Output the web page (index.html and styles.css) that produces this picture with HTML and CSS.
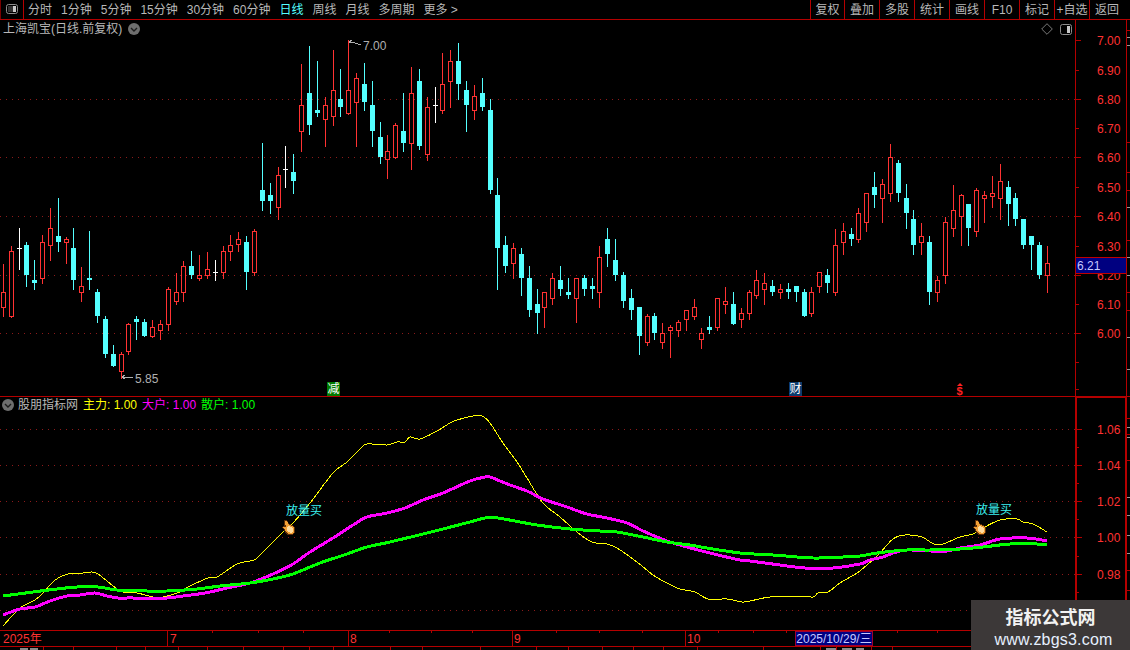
FILE: index.html
```html
<!DOCTYPE html>
<html lang="zh-CN">
<head>
<meta charset="utf-8">
<title>上海凯宝 日线</title>
<link rel="stylesheet" href="styles.css">
</head>
<body>
<div class="app">
  <header class="toolbar">
    <div class="toggle-cell">
      <svg class="toggle-icon" width="13" height="11" viewBox="0 0 13 11"><rect x="0.5" y="0.5" width="11" height="9" rx="2" fill="none" stroke="#8c8c8c"/><rect x="7" y="2" width="3" height="6" fill="#c8c8c8"/><rect x="2" y="2" width="5" height="6" fill="#333"/></svg>
    </div>
    <nav class="periods">
      <span>分时</span><span>1分钟</span><span>5分钟</span><span>15分钟</span><span>30分钟</span><span>60分钟</span><span class="active">日线</span><span>周线</span><span>月线</span><span>多周期</span><span>更多 &gt;</span>
    </nav>
    <div class="actions">
      <span class="first">复权</span><span>叠加</span><span>多股</span><span>统计</span><span>画线</span><span>F10</span><span>标记</span><span>+自选</span><span class="last">返回</span>
    </div>
  </header>

  <section class="panel price-panel">
    <div class="plot">
      <svg id="pricePlot" class="fill"></svg>
      <div class="legend">
        <span>上海凯宝(日线.前复权)</span>
        <svg class="round-icon" width="12" height="12" viewBox="0 0 12 12"><circle cx="6" cy="6" r="6" fill="#6e6e6e"/><path d="M3 5l3 3 3-3" fill="none" stroke="#1c1c1c" stroke-width="1.4"/></svg>
      </div>
      <div class="corner-icons">
        <svg width="12" height="12" viewBox="0 0 12 12"><path d="M6 .7L11.3 6 6 11.3.7 6z" fill="none" stroke="#7a7a7a"/></svg>
        <svg width="13" height="11" viewBox="0 0 13 11"><rect x="0.5" y="0.5" width="11" height="10" rx="2" fill="none" stroke="#8c8c8c"/><rect x="7" y="2" width="3" height="7" fill="#c8c8c8"/></svg>
      </div>
      <span class="flag flag-green">减</span>
      <span class="flag flag-blue">财</span>
      <span class="flag flag-dollar">$</span>
    </div>
    <div class="axis">
      <svg id="priceAxis" class="fill"></svg>
      <div class="price-tag">6.21</div>
    </div>
    <div class="strip"><svg id="priceStrip" class="fill"></svg></div>
  </section>

  <section class="panel indicator-panel">
    <div class="plot">
      <svg id="indicatorPlot" class="fill"></svg>
      <div class="legend indicator-legend">
        <svg class="round-icon-left" width="12" height="12" viewBox="0 0 12 12"><circle cx="6" cy="6" r="6" fill="#6e6e6e"/><path d="M3 5l3 3 3-3" fill="none" stroke="#1c1c1c" stroke-width="1.4"/></svg>
        <span class="name">股朋指标网</span>
        <span class="yellow">主力: 1.00</span>
        <span class="magenta">大户: 1.00</span>
        <span class="green">散户: 1.00</span>
      </div>
    </div>
    <div class="axis"><svg id="indicatorAxis" class="fill"></svg></div>
    <div class="strip"><svg id="indicatorStrip" class="fill"></svg></div>
  </section>

  <div class="time-axis">
    <svg id="timeAxis" class="fill"></svg>
    <div class="date-tag">2025/10/29/三</div>
  </div>
  <div class="footer"><svg id="footer" class="fill"></svg></div>

  <aside class="watermark">
    <strong>指标公式网</strong>
    <span>www.zbgs3.com</span>
  </aside>
</div>
<script src="chart.js"></script>
</body>
</html>
```

FILE: styles.css
```css
* { box-sizing: border-box; }
html, body { margin: 0; height: 100%; background: #000; overflow: hidden; }
body { font: 12px/1 "Liberation Sans", "Noto Sans CJK SC", sans-serif; color: #b8b8b8; }
.app { position: relative; width: 1130px; height: 650px; display: flex; flex-direction: column; }
.fill { display: block; width: 100%; height: 100%; }

.toolbar { height: 20px; flex: none; display: flex; align-items: stretch; border-bottom: 1px solid #b40000; }
.toggle-cell { width: 24px; display: flex; align-items: center; padding-left: 5px; border-right: 1px solid #b40000; border-left: 1px solid #7a0000; }
.periods { display: flex; align-items: center; gap: 9px; margin-left: 4px; white-space: nowrap; }
.periods .active { color: #54ffff; }
.actions { margin-left: auto; display: flex; }
.actions span { width: 35px; border-left: 1px solid #b40000; display: flex; align-items: center; justify-content: center; white-space: nowrap; }
.actions .first { width: 34px; }
.actions .last { width: 41px; padding-right: 6px; }

.panel { display: grid; grid-template-columns: 1075px 52px 3px; flex: none; }
.price-panel { height: 377px; border-bottom: 1px solid #b40000; }
.indicator-panel { height: 233px; }
.plot, .axis { position: relative; }
.price-panel .axis { border-left: 1px solid #b40000; border-right: 1px solid #b40000; }
.indicator-panel .axis { border-left: 2px solid #b40000; border-right: 2px solid #b40000; border-top: 1px solid #b40000; }

.legend { position: absolute; left: 3px; top: 3px; display: flex; align-items: center; gap: 6px; white-space: nowrap; }
.indicator-legend { left: 2px; top: 2px; gap: 5px; }
.indicator-legend .round-icon-left { margin-right: -1px; }
.yellow { color: #ffff00; }
.magenta { color: #ff00ff; }
.green { color: #00ff00; }

.corner-icons { position: absolute; right: 2px; top: 3px; display: flex; align-items: center; gap: 7px; }

.flag { position: absolute; top: 362px; width: 13px; height: 14px; display: flex; align-items: center; justify-content: center; color: #fff; font-size: 12px; }
.flag-green { left: 327px; background: #007a00; }
.flag-blue { left: 789px; background: #0b3c6e; }
.flag-dollar { left: 953px; top: 366px; height: 10px; color: #ff2020; font-size: 11px; font-weight: 700; }
.flag-dollar::before { content: ""; position: absolute; left: 4px; top: -3px; border-left: 3px solid transparent; border-right: 3px solid transparent; border-bottom: 3px solid #ff2020; }

.price-tag { position: absolute; left: 0; right: 0; top: 237px; height: 17px; padding-left: 1px; display: flex; align-items: center; background: #000080; border-top: 1px solid #c00000; border-bottom: 1px solid #c00000; color: #c8c8ff; }

.time-axis { position: relative; height: 17px; flex: none; border-top: 1px solid #b40000; border-bottom: 1px solid #b40000; }
.date-tag { position: absolute; left: 795px; top: 0; width: 78px; height: 15px; display: flex; align-items: center; justify-content: center; background: #000080; border: 1px solid #a00030; color: #c8c8ff; white-space: nowrap; }
.footer { flex: 1; overflow: hidden; }

.watermark { position: absolute; left: 971px; top: 600px; width: 159px; height: 50px; background: #3c3838; color: #f2f2f2; display: flex; flex-direction: column; align-items: center; padding-top: 6px; gap: 5px; }
.watermark strong { font: 700 18px/20px "Noto Sans CJK SC", sans-serif; }
.watermark span { font: 16px/18px "Liberation Sans", sans-serif; letter-spacing: 0.2px; color: #e6f0ff; margin-left: 6px; }

svg text { font-family: "Liberation Sans", "Noto Sans CJK SC", sans-serif; font-size: 12px; }
.axis-label { fill: #ff3232; }
.time-label { fill: #ff3232; }
.note { fill: #b0b0b0; }
.buy { fill: #3cf0f0; }
```

FILE: chart.js
```js
(function () {
  var NS = 'http://www.w3.org/2000/svg';
  function el(parent, tag, attrs, text) {
    var n = document.createElementNS(NS, tag);
    for (var k in attrs) n.setAttribute(k, attrs[k]);
    if (text) n.textContent = text;
    parent.appendChild(n);
    return n;
  }
  function stage(id) {
    var s = document.getElementById(id), r = s.getBoundingClientRect();
    s.setAttribute('viewBox', r.left + ' ' + r.top + ' ' + r.width + ' ' + r.height);
    s.setAttribute('shape-rendering', 'crispEdges');
    return s;
  }
  function bar(s, x, y, w, h, c) { el(s, 'rect', { x: x, y: y, width: w, height: h, fill: c }); }

  var RED = '#ff3232', CYAN = '#54ffff', WHITE = '#ffffff', LINE = '#b40000', DOT = '#8c1a1a';

  function grid(s, ys, w) {
    ys.forEach(function (y) {
      el(s, 'line', { x1: 0, x2: w, y1: y + 0.5, y2: y + 0.5, stroke: DOT, 'stroke-width': 1, 'stroke-dasharray': '1 5' });
    });
  }

  /* candles: [y origin, "type high,top,bottom,low" ...] in 3x crop units */
  var groups = [
    [130, 'R402,487,533,558 R348,364,560,560 W294,355,355,417 C336,345,435,468 C390,450,459,477 R315,337,446,459 R234,295,347,390 C204,318,336,363 R321,328,339,399 C294,354,450,477 R411,469,488,513 C303,444,450,477 C477,486,558,576 C558,567,672,681 C645,672,708,708 R666,673,725,745 R580,583,665,672 C558,567,576,627 C567,576,618,618 R570,592,620,620 R570,583,602,627 R472,478,584,600 R430,487,515,522 R393,409,488,513 C363,408,435,444 R375,436,445,450 R366,418,437,444 W390,427,427,450 R348,364,428,444 R315,346,365,390 R306,328,346,363 C318,336,426,477 R297,304,428,435 C39,180,213,240'],
    [30, 'C460,495,513,550 R411,436,533,567 W348,418,418,471 C372,426,453,489 R102,226,305,363 C48,189,285,312 C93,240,249,258 R201,226,269,348 R60,181,260,285 C117,207,231,258 R30,181,251,251 R129,145,218,348 C99,162,216,240 C153,225,303,348 C276,321,381,399 R315,364,391,444 R279,286,383,383 C189,303,339,363 R111,190,341,417 C117,153,348,357 R201,232,374,390 W171,226,226,276 R69,163,242,249 R60,94,155,231 C39,93,162,207 C153,180,225,303 R165,199,242,267 C144,189,231,240 C207,240,480,489'],
    [170, 'C24,75,234,357 C198,225,288,306 R219,235,281,324 C234,252,324,375 C288,324,420,438 C357,402,429,489 R366,367,413,471 R309,325,387,402 C288,330,357,375 C324,366,375,384 R325,325,386,456 C315,324,357,375 C324,348,357,384 R228,262,368,411 C174,207,252,288 C207,270,315,330 C306,315,393,411 C357,384,420,447 C411,411,498,552 R432,439,518,525 C429,438,489,507 R459,490,518,534 R465,472,482,561 R450,457,483,498 R421,421,449,480 R387,412,440,447 R474,490,509,534 C438,471,480,489 R385,385,473,480 R351,394,403,429 C366,402,462,462 R414,430,449,471 R360,367,431,447 R300,331,377,384 R309,340,359,402 C330,348,366,375'],
    [130, 'R462,478,488,503 C459,477,486,504 C468,468,486,513 C477,486,558,558 R471,487,552,558 R427,427,470,486 C417,435,459,486 R297,346,488,495 R279,304,338,372 C294,312,327,345 R234,250,329,336 R190,190,278,303 C126,171,195,231 R147,163,206,276 R42,82,191,213 C90,99,189,213 C162,204,249,294 C240,267,345,372 R279,319,338,372 C318,336,486,522 R438,451,488,513 R260,277,437,459 R165,241,296,318 R192,196,260,345 C222,222,294,345 R174,181,305,318 R183,196,206,276 R138,190,198,231 R102,154,206,267 C153,171,222,285 C189,204,267,285 C267,267,345,354 C318,318,345,417 C336,345,436,444 R348,400,437,486']
  ];

  var price = stage('pricePlot');
  grid(price, [99, 157, 216, 275, 333], 1075);

  var index = 0;
  groups.forEach(function (g) {
    g[1].split(' ').forEach(function (item) {
      var type = item[0];
      var v = item.slice(1).split(',').map(function (n) { return Math.round(g[0] + Number(n) / 3); });
      var col = Math.floor(3.33 + 7.85 * index);
      var color = type === 'R' ? RED : type === 'C' ? CYAN : WHITE;
      bar(price, col, v[0], 1, v[3] - v[0] + 1, color);
      if (type === 'W') {
        bar(price, col - 2, v[1], 5, 1, WHITE);
      } else if (type === 'C') {
        bar(price, col - 2, v[1], 5, Math.max(v[2] - v[1], 2), CYAN);
      } else {
        var h = Math.max(v[2] - v[1], 4);
        bar(price, col - 2, v[1], 5, h, RED);
        bar(price, col - 1, v[1] + 1, 3, h - 2, '#000');
      }
      index++;
    });
  });

  /* high / low annotations */
  el(price, 'text', { x: 363, y: 50, class: 'note' }, '7.00');
  el(price, 'path', { d: 'M349 42h3M349 42l3-2M349 42v1M352 42l9 3', stroke: '#b0b0b0', fill: 'none' });
  el(price, 'text', { x: 135, y: 383, class: 'note' }, '5.85');
  el(price, 'path', { d: 'M122 377h11M122 377l3-2M122 377l3 2', stroke: '#b0b0b0', fill: 'none' });

  /* price axis */
  var pa = stage('priceAxis');
  var labels = [['7.00', 40, 1], ['6.90', 70, 0], ['6.80', 99, 1], ['6.70', 128, 0], ['6.60', 157, 1], ['6.50', 187, 0], ['6.40', 216, 1], ['6.30', 246, 0], ['6.20', 275, 1], ['6.10', 304, 0], ['6.00', 333, 1]];
  labels.forEach(function (l) {
    bar(pa, 1076, l[1], l[2] ? 5 : 3, 1, LINE);
    el(pa, 'text', { x: 1097, y: l[1] + 5, class: 'axis-label' }, l[0]);
  });
  [362, 389].forEach(function (y) { bar(pa, 1076, y, 3, 1, LINE); });

  function strip(id, ys) {
    var s = stage(id);
    ys.forEach(function (y) { bar(s, 1127, y, 3, 1, y % 2 ? '#9a9a9a' : LINE); });
  }
  strip('priceStrip', [30, 37, 45, 142, 172, 190, 207, 240, 257, 275, 292, 310, 337, 369]);
  strip('indicatorStrip', [418, 427, 434, 437, 460, 497, 515, 535, 553, 570, 590]);

  /* indicator */
  var ind = stage('indicatorPlot');
  grid(ind, [429, 465, 501, 537, 574, 610], 1075);

  var yellow = '3,626 20,608 35,600 43,593 55,580 68,574 83,573 92,572 98,574 107,581 117,589 123,592 137,593 153,597 163,597 180,592 188,587 208,578 217,577 237,564 250,561 257,558 283,532 293,523 310,503 333,473 347,462 360,449 367,444 387,445 397,442 405,442 410,437 420,439 437,431 450,423 457,420 473,416 482,416 490,423 503,443 517,462 527,478 543,503 560,517 577,532 592,542 607,544 617,548 637,562 653,575 667,583 680,589 695,592 708,599 727,599 742,602 750,601 770,597 800,596 813,597 818,593 828,592 840,583 857,573 867,565 880,553 893,539 905,535 922,537 938,545 960,537 973,534 983,528 1000,520 1017,519 1023,522 1033,524 1047,532';
  var magenta = '3,615 20,609 35,607 50,601 67,596 80,595 95,593 107,596 118,598 133,598 140,599 167,598 183,596 205,593 227,588 250,583 273,574 293,564 310,552 333,538 353,525 367,517 387,513 405,508 423,500 443,493 470,481 485,477 490,477 510,485 527,491 543,499 567,507 587,514 607,518 627,523 643,531 667,541 687,547 710,553 740,560 750,561 780,565 805,568 833,568 860,564 870,560 883,557 893,553 907,550 930,551 947,551 960,548 980,545 1000,539 1027,538 1047,541';
  var green = '3,596 33,592 57,589 77,587 98,587 117,590 147,591 167,591 197,589 220,586 250,583 273,579 293,574 320,563 347,554 367,547 390,542 423,534 443,529 470,522 485,518 498,518 537,525 570,529 600,531 617,532 643,537 667,542 690,545 707,548 740,553 773,555 813,558 843,557 860,556 877,553 907,550 930,550 960,549 983,547 1010,544 1037,544 1047,545';

  /* Catmull-Rom through the sampled points, so the curves have no corners */
  function smooth(points) {
    var p = points.split(' ').map(function (s) { return s.split(',').map(Number); });
    var d = 'M' + p[0][0] + ' ' + p[0][1];
    for (var i = 0; i < p.length - 1; i++) {
      var a = p[Math.max(i - 1, 0)], b = p[i], c = p[i + 1], e = p[Math.min(i + 2, p.length - 1)];
      d += 'C' + (b[0] + (c[0] - a[0]) / 6).toFixed(1) + ' ' + (b[1] + (c[1] - a[1]) / 6).toFixed(1) + ' ' +
        (c[0] - (e[0] - b[0]) / 6).toFixed(1) + ' ' + (c[1] - (e[1] - b[1]) / 6).toFixed(1) + ' ' + c[0] + ' ' + c[1];
    }
    return d;
  }
  function curve(points, color, width) {
    el(ind, 'path', { d: smooth(points), fill: 'none', stroke: color, 'stroke-width': width });
  }
  curve(yellow, '#ffff00', 1);
  curve(magenta, '#ff00ff', 3);
  curve(green, '#00ff00', 3);

  function hand(x) {
    var g = el(ind, 'g', { transform: 'translate(' + x + ',520)' });
    el(g, 'path', { d: 'M2 0L5 0L7 4L10 5L13 7L13 12L10 15L5 15L2 10L0 7L2 6Z', fill: '#5a2c08' });
    el(g, 'path', { d: 'M3 1L5 1L7 5L10 6L12 8L12 12L10 14L6 14L3 10L1 7L3 7L4 8Z', fill: '#f2a036' });
    el(g, 'path', { d: 'M6 6L10 7L11 9L11 12L9 13L6 12L5 9Z', fill: '#ffdca0' });
  }
  hand(282);
  hand(973);
  el(ind, 'text', { x: 286, y: 515, class: 'buy' }, '放量买');
  el(ind, 'text', { x: 976, y: 514, class: 'buy' }, '放量买');

  var ia = stage('indicatorAxis');
  [['1.06', 429], ['1.04', 465], ['1.02', 501], ['1.00', 537], ['0.98', 574]].forEach(function (l) {
    bar(ia, 1077, l[1], 5, 1, LINE);
    el(ia, 'text', { x: 1097, y: l[1] + 5, class: 'axis-label' }, l[0]);
  });
  [447, 483, 519, 556, 592].forEach(function (y) { bar(ia, 1077, y, 2, 1, LINE); });

  /* time axis */
  var ta = stage('timeAxis');
  [[3, '2025年', 0], [170, '7', 167], [350, '8', 348], [514, '9', 512], [687, '10', 685]].forEach(function (t) {
    if (t[2]) bar(ta, t[2], 630, 1, 16, LINE);
    el(ta, 'text', { x: t[0], y: 643, class: 'time-label' }, t[1]);
  });
  [212, 258, 303, 389, 431, 472, 556, 599, 642, 718, 753, 786, 897, 937].forEach(function (x) {
    bar(ta, x, 631, 1, 2, LINE);
  });

  /* row under the time axis: only its ticks and the tops of its marks show */
  var ft = stage('footer');
  [43, 73, 116, 145, 178, 207, 243, 283, 309, 333, 390, 422, 480, 536, 568, 602, 633, 663, 697, 763, 820, 836, 871, 892].forEach(function (x) {
    bar(ft, x, 647, 1, 3, LINE);
  });
  [[20, 8], [30, 8], [826, 10], [842, 10], [856, 8]].forEach(function (m) {
    bar(ft, m[0], 648, m[1], 2, '#8a8a8a');
  });
})();
```
